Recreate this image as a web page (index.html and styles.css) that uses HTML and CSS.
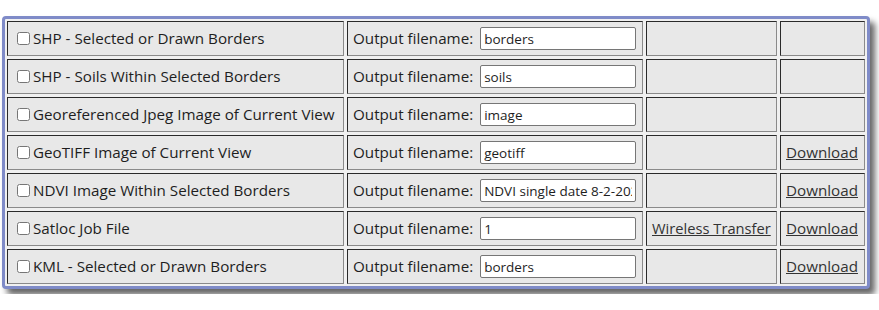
FILE: index.html
```html
<!DOCTYPE html>
<html lang="en">
<head>
    <meta charset="UTF-8">
    <title>Export Options</title>
    <link rel="stylesheet" href="styles.css">
</head>
<body>
    <div class="export-panel">
        <table class="export-table">
            <tr>
                <td class="col-type"><label class="cell-row"><input type="checkbox">SHP - Selected or Drawn Borders</label></td>
                <td class="col-name"><div class="cell-row">Output filename: <input type="text" class="file-input" value="borders"></div></td>
                <td class="col-extra"></td>
                <td class="col-link"></td>
            </tr>
            <tr>
                <td class="col-type"><label class="cell-row"><input type="checkbox">SHP - Soils Within Selected Borders</label></td>
                <td class="col-name"><div class="cell-row">Output filename: <input type="text" class="file-input" value="soils"></div></td>
                <td class="col-extra"></td>
                <td class="col-link"></td>
            </tr>
            <tr>
                <td class="col-type"><label class="cell-row"><input type="checkbox">Georeferenced Jpeg Image of Current View</label></td>
                <td class="col-name"><div class="cell-row">Output filename: <input type="text" class="file-input" value="image"></div></td>
                <td class="col-extra"></td>
                <td class="col-link"></td>
            </tr>
            <tr>
                <td class="col-type"><label class="cell-row"><input type="checkbox">GeoTIFF Image of Current View</label></td>
                <td class="col-name"><div class="cell-row">Output filename: <input type="text" class="file-input" value="geotiff"></div></td>
                <td class="col-extra"></td>
                <td class="col-link"><div class="cell-row"><a href="#">Download</a></div></td>
            </tr>
            <tr>
                <td class="col-type"><label class="cell-row"><input type="checkbox">NDVI Image Within Selected Borders</label></td>
                <td class="col-name"><div class="cell-row">Output filename: <input type="text" class="file-input" value="NDVI single date 8-2-2022"></div></td>
                <td class="col-extra"></td>
                <td class="col-link"><div class="cell-row"><a href="#">Download</a></div></td>
            </tr>
            <tr>
                <td class="col-type"><label class="cell-row"><input type="checkbox">Satloc Job File</label></td>
                <td class="col-name"><div class="cell-row">Output filename: <input type="text" class="file-input" value="1"></div></td>
                <td class="col-extra"><div class="cell-row"><a href="#">Wireless Transfer</a></div></td>
                <td class="col-link"><div class="cell-row"><a href="#">Download</a></div></td>
            </tr>
            <tr>
                <td class="col-type"><label class="cell-row"><input type="checkbox">KML - Selected or Drawn Borders</label></td>
                <td class="col-name"><div class="cell-row">Output filename: <input type="text" class="file-input" value="borders"></div></td>
                <td class="col-extra"></td>
                <td class="col-link"><div class="cell-row"><a href="#">Download</a></div></td>
            </tr>
        </table>
    </div>
</body>
</html>
```

FILE: styles.css
```css
:root {
    --panel-border: #7f8bc8;
    --cell-bg: #e8e8e8;
    --panel-bg: #f0f0f0;
    --text: #1e1e1e;
}

body {
    margin: 0;
    background: #ffffff;
    font-family: 'Open Sans', 'Noto Sans', sans-serif;
    color: var(--text);
}

.export-panel {
    display: inline-block;
    margin: 16px 0 0 2px;
    border: 3px solid var(--panel-border);
    border-radius: 4px;
    background: var(--panel-bg);
    box-shadow: 5px 6px 6px rgba(0, 0, 0, 0.6);
}

.export-table {
    width: 864px;
    margin: -1px;
    border-collapse: separate;
    border-spacing: 3px;
    table-layout: fixed;
    font-size: 15.2px;
}

.export-table td {
    box-sizing: border-box;
    height: 35px;
    padding: 5px;
    background: var(--cell-bg);
    border: 1px solid;
    border-color: #2a2a2a #8a8a8a #8a8a8a #2a2a2a;
    white-space: nowrap;
    overflow: hidden;
}

.col-type { width: 337px; }
.col-name { width: 296px; }
.col-extra { width: 131px; font-size: 14.7px; }
.col-link { width: 85px; }

.cell-row {
    display: flex;
    align-items: center;
    height: 23px;
    line-height: 23px;
}

.col-type input[type="checkbox"] {
    width: 13px;
    height: 13px;
    margin: 0 3px 0 4px;
    flex: none;
}

.file-input {
    box-sizing: border-box;
    flex: none;
    width: 156px;
    height: 23px;
    margin-left: 7px;
    padding: 1px 3px;
    border: 1px solid #767676;
    border-radius: 2px;
    font-family: 'Open Sans', 'Noto Sans', sans-serif;
    font-size: 13.5px;
    line-height: normal;
    color: var(--text);
    background: #ffffff;
}

.export-table a {
    color: #333333;
    text-decoration: underline;
}
```
